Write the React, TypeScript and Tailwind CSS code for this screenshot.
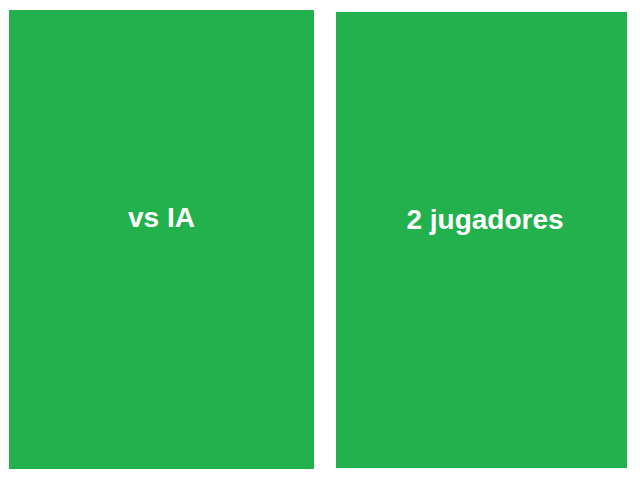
import React from 'react';

export default function App() {
  return (
    <div className="w-[640px] h-[480px] bg-white flex items-start" style={{ fontFamily: '"Liberation Sans", Arial, sans-serif' }}>
      <button className="ml-[9px] mt-[10px] w-[305px] h-[459px] bg-[#23b14d] text-white font-bold text-[28px] flex items-center justify-center pb-[44px]">
        vs IA
      </button>
      <button className="ml-[22px] mt-[12px] w-[291px] h-[456px] bg-[#23b14d] text-white font-bold text-[28px] flex items-center justify-center pb-[40px] pl-[7px]">
        2 jugadores
      </button>
    </div>
  );
}
